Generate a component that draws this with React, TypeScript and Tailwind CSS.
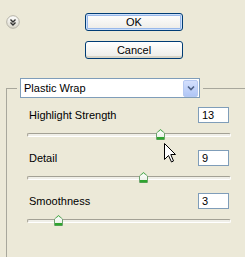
const sliders = [
  { label: "Highlight Strength", value: 13, thumb: 133 },
  { label: "Detail", value: 9, thumb: 116 },
  { label: "Smoothness", value: 3, thumb: 31 },
];

function ChevronButton() {
  return (
    <svg width="14" height="14" viewBox="0 0 14 14">
      <defs>
        <linearGradient id="cb" x1="0" y1="0" x2="0" y2="1">
          <stop offset="0" stopColor="#ffffff" />
          <stop offset="1" stopColor="#d9d6c9" />
        </linearGradient>
      </defs>
      <circle cx="7" cy="7" r="6.3" fill="url(#cb)" stroke="#b4b2a6" />
      <path d="M4.5 4.5 L7 7 L9.5 4.5 M4.5 7.5 L7 10 L9.5 7.5" fill="none" stroke="#333" strokeWidth="1.4" />
    </svg>
  );
}

function Thumb() {
  return (
    <svg width="9" height="11" viewBox="0 0 9 11">
      <defs>
        <linearGradient id="tg" x1="0" y1="0" x2="0" y2="1">
          <stop offset="0" stopColor="#ffffff" />
          <stop offset="1" stopColor="#e6eee2" />
        </linearGradient>
      </defs>
      <path d="M4.5 0.5 L8.5 4 L8.5 10.5 L0.5 10.5 L0.5 4 Z" fill="url(#tg)" stroke="#6fa46f" />
      <rect x="1" y="8" width="7" height="2.5" fill="#2fa42f" />
      <path d="M2.5 2.5 L4.5 0.8 L6.5 2.5" fill="none" stroke="#4fb44f" />
    </svg>
  );
}

function Cursor() {
  return (
    <svg width="12" height="20" viewBox="0 0 12 20">
      <path
        d="M0.5 0.5 L0.5 16.5 L4.5 12.5 L7.5 19 L9.5 18 L6.8 11.5 L11.5 11.5 Z"
        fill="#fff"
        stroke="#000"
        strokeLinejoin="miter"
      />
    </svg>
  );
}

function SliderRow({ label, value, thumb }: { label: string; value: number; thumb: number }) {
  return (
    <div className="flex w-[204px] flex-col">
      <div className="flex h-[16px] w-[204px] items-center justify-between px-[2px]">
        <span className="leading-none">{label}</span>
        <div className="flex h-[16px] w-[31px] items-center border border-[#7f9db9] bg-white pl-[3px] leading-none">
          {value}
        </div>
      </div>
      <div className="relative mt-[2px] h-[16px] w-[204px]">
        <div className="mt-[8px] h-[4px] rounded-full border border-[#a3a195] border-b-white border-r-white bg-[#f0efe8]" />
        <div className="absolute top-[4px]" style={{ left: thumb - 4 }}>
          <Thumb />
        </div>
      </div>
    </div>
  );
}

export default function App() {
  return (
    <div
      className="relative h-[257px] w-[245px] overflow-hidden bg-[#ece9d8] text-[11px] text-black"
      style={{ fontFamily: '"Liberation Sans", Arial, sans-serif' }}
    >
      <div className="flex items-start pt-[13px]">
        <div className="ml-[6px] mt-[2px]">
          <ChevronButton />
        </div>
        <div className="ml-[65px] flex w-[98px] flex-col gap-[10px]">
          <button
            type="button"
            className="flex h-[18px] items-center justify-center rounded-[3px] border border-[#003c74] bg-gradient-to-b from-white to-[#ecebe6] shadow-[inset_0_0_0_1px_#cde0fb,inset_0_0_0_2px_#98b8ea]"
          >
            OK
          </button>
          <button
            type="button"
            className="flex h-[18px] items-center justify-center rounded-[3px] border border-[#003c74] bg-gradient-to-b from-white to-[#ecebe6] shadow-[inset_0_-2px_0_#d8d4c6]"
          >
            Cancel
          </button>
        </div>
      </div>

      <div className="ml-[6px] mt-[29px] h-[320px] w-[260px] border-l border-t border-[#a8a79c]">
        <div className="-mt-[11px] ml-[10px] w-fit bg-[#ece9d8] px-[3px]">
          <div className="flex h-[20px] w-[180px] items-center border border-[#7f9db9] bg-white pl-[3px] pr-[1px]">
            <span className="flex-1 leading-none">Plastic Wrap</span>
            <div className="flex h-[17px] w-[15px] items-center justify-center rounded-[2px] border border-[#b6c9f2] bg-gradient-to-b from-[#d4e0fd] to-[#b0c6f6]">
              <svg width="8" height="6" viewBox="0 0 8 6">
                <path d="M1 1.5 L4 4.5 L7 1.5" fill="none" stroke="#4d6185" strokeWidth="1.6" />
              </svg>
            </div>
          </div>
        </div>
        <div className="mt-[9px] flex flex-col gap-[9px] pl-[20px]">
          {sliders.map((s) => (
            <SliderRow key={s.label} {...s} />
          ))}
        </div>
      </div>

      <div className="absolute left-[164px] top-[143px]">
        <Cursor />
      </div>
    </div>
  );
}
